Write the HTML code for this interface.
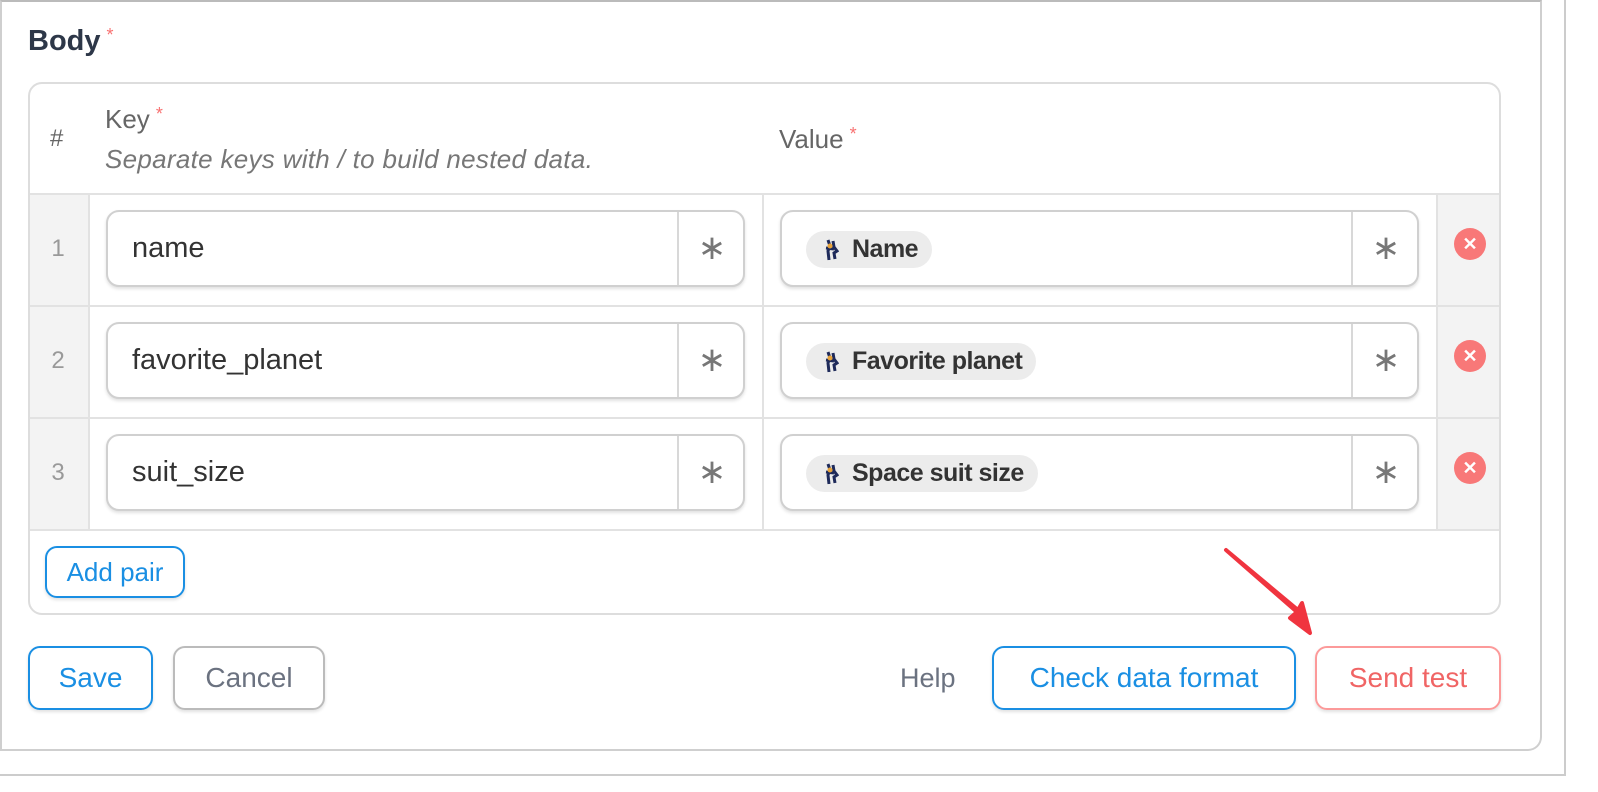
<!DOCTYPE html>
<html><head><meta charset="utf-8"><style>
*{box-sizing:border-box;margin:0;padding:0}
body{width:1598px;height:792px;background:#fff;font-family:"Liberation Sans",sans-serif;position:relative;overflow:hidden}
.abs{position:absolute}
.frame{left:0;top:0;width:1566px;height:776px;border:2px solid #ccc;border-top:none;border-left:none}
.card{left:0;top:0;width:1542px;height:751px;border:2px solid #cfcfcf;border-top-color:#bbb;border-radius:0 0 14px 0}
.star{color:#f87171;font-size:18px;vertical-align:top;font-weight:normal}
.table{left:28px;top:82px;width:1473px;height:533px;border:2px solid #ddd;border-radius:14px;overflow:hidden}
.hdr{color:#666;font-size:26px}
.cellbg{background:#f3f3f3}
.hl{position:absolute;height:2px;background:#e2e2e2}
.vl{position:absolute;width:2px;background:#e2e2e2}
.inp{position:absolute;width:639px;height:77px;border:2px solid #d0d0d0;border-radius:13px;background:#fff;box-shadow:0 2px 3px rgba(0,0,0,.12)}
.inp .div{position:absolute;left:569px;top:0;bottom:0;width:2px;background:#d8d8d8}
.inp .ast{position:absolute;left:571px;width:66px;top:0;height:73px;line-height:73px;text-align:center;color:#777;font-size:34px}
.inp .txt{position:absolute;left:24px;top:0;line-height:73px;font-size:29px;color:#333}
.pill{position:absolute;left:24px;top:19px;height:37px;border-radius:19px;background:#ececec;padding:0 14px 0 46px;line-height:37px;font-size:25px;font-weight:bold;color:#333;letter-spacing:-0.5px}
.pill svg{position:absolute;left:17px;top:7px}
.num{position:absolute;left:0;width:60px;text-align:center;font-size:24px;color:#999}
.del{position:absolute;left:1454px;width:32px;height:32px;border-radius:50%;background:#f87878;color:#fff;text-align:center;line-height:32px;font-size:18px;font-weight:bold}
.btn{position:absolute;border:2px solid;border-radius:12px;text-align:center;font-size:28px;box-shadow:0 2px 3px rgba(0,0,0,.12)}
</style></head><body>
<div class="abs frame"></div>
<div class="abs card"></div>
<div class="abs" style="left:28px;top:25px;font-size:29px;font-weight:bold;color:#2d3748">Body<span class="star" style="margin-left:6px">*</span></div>
<div class="abs table">
  <div class="abs cellbg" style="left:0;top:111px;width:60px;height:336px"></div>
  <div class="abs cellbg" style="left:1408px;top:111px;width:65px;height:336px"></div>
  <div class="hl" style="left:0;right:0;top:109px"></div>
  <div class="hl" style="left:0;right:0;top:221px"></div>
  <div class="hl" style="left:0;right:0;top:333px"></div>
  <div class="hl" style="left:0;right:0;top:445px"></div>
  <div class="vl" style="left:58px;top:111px;height:334px"></div>
  <div class="vl" style="left:732px;top:111px;height:334px"></div>
  <div class="vl" style="left:1406px;top:111px;height:334px"></div>
</div>
<div class="abs hdr" style="left:50px;top:125px;font-size:24px">#</div>
<div class="abs hdr" style="left:105px;top:104px">Key<span class="star" style="margin-left:6px">*</span></div>
<div class="abs hdr" style="left:105px;top:144px;font-style:italic;font-size:26px;color:#777;letter-spacing:0.3px">Separate keys with / to build nested data.</div>
<div class="abs hdr" style="left:779px;top:124px">Value<span class="star" style="margin-left:6px">*</span></div>

<div class="num" style="left:28px;top:235px">1</div>
<div class="num" style="left:28px;top:347px">2</div>
<div class="num" style="left:28px;top:459px">3</div>

<div class="inp" style="left:106px;top:210px"><div class="txt">name</div><div class="div"></div><div class="ast">∗</div></div>
<div class="inp" style="left:106px;top:322px"><div class="txt">favorite_planet</div><div class="div"></div><div class="ast">∗</div></div>
<div class="inp" style="left:106px;top:434px"><div class="txt">suit_size</div><div class="div"></div><div class="ast">∗</div></div>

<div class="inp" style="left:780px;top:210px"><div class="pill"><svg width="16" height="24" viewBox="0 0 16 24"><path d="M5 2l2 6-2 5 1 9M10 3l1 6 3 4-3 2 1 6M3 10l8 1" stroke="#1e2a5a" stroke-width="3" fill="none"/><circle cx="7" cy="8" r="2.5" fill="#e8a33a"/></svg>Name</div><div class="div"></div><div class="ast">∗</div></div>
<div class="inp" style="left:780px;top:322px"><div class="pill"><svg width="16" height="24" viewBox="0 0 16 24"><path d="M5 2l2 6-2 5 1 9M10 3l1 6 3 4-3 2 1 6M3 10l8 1" stroke="#1e2a5a" stroke-width="3" fill="none"/><circle cx="7" cy="8" r="2.5" fill="#e8a33a"/></svg>Favorite planet</div><div class="div"></div><div class="ast">∗</div></div>
<div class="inp" style="left:780px;top:434px"><div class="pill"><svg width="16" height="24" viewBox="0 0 16 24"><path d="M5 2l2 6-2 5 1 9M10 3l1 6 3 4-3 2 1 6M3 10l8 1" stroke="#1e2a5a" stroke-width="3" fill="none"/><circle cx="7" cy="8" r="2.5" fill="#e8a33a"/></svg>Space suit size</div><div class="div"></div><div class="ast">∗</div></div>

<div class="del" style="top:228px">✕</div>
<div class="del" style="top:340px">✕</div>
<div class="del" style="top:452px">✕</div>

<div class="btn" style="left:45px;top:546px;width:140px;height:52px;line-height:48px;border-color:#1a8fe3;color:#1a8fe3;font-size:26px">Add pair</div>
<div class="btn" style="left:28px;top:646px;width:125px;height:64px;line-height:60px;border-color:#1a8fe3;color:#1a8fe3">Save</div>
<div class="btn" style="left:173px;top:646px;width:152px;height:64px;line-height:60px;border-color:#bbb;color:#6b7280">Cancel</div>
<div class="abs" style="left:900px;top:663px;font-size:27px;color:#6b7280">Help</div>
<div class="btn" style="left:992px;top:646px;width:304px;height:64px;line-height:60px;border-color:#1a8fe3;color:#1a8fe3">Check data format</div>
<div class="btn" style="left:1315px;top:646px;width:186px;height:64px;line-height:60px;border-color:#fc9a9a;color:#f06565">Send test</div>

<svg class="abs" style="left:0;top:0" width="1598" height="792"><path d="M1226 550 L1297 612 L1290 618 L1310 633 L1302 603 L1298 610 Z" fill="#f0343f" stroke="#f0343f" stroke-width="4" stroke-linejoin="round"/></svg>
</body></html>
